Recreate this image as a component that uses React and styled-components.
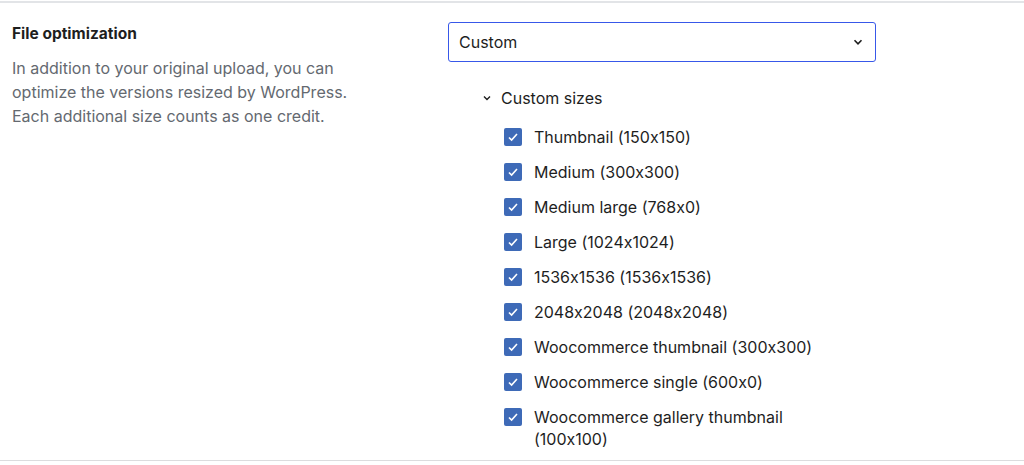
import React from 'react';
import styled, { createGlobalStyle } from 'styled-components';

const Global = createGlobalStyle`
  body {
    margin: 0;
    background: #fff;
    font-family: "Inter", "Liberation Sans", sans-serif;
    font-feature-settings: "calt" 0;
    color: #1e1e1e;
  }
`;

const Section = styled.div`
  border-top: 2px solid #e2e4e7;
  border-bottom: 1px solid #dcdcde;
  margin-top: 1px;
  height: 460px;
  box-sizing: border-box;
  display: grid;
  grid-template-columns: 436px 428px;
  padding: 19px 0 0 12px;
`;

const Left = styled.div`
  padding-top: 2px;
`;

const Title = styled.h3`
  margin: 0 0 12px;
  font-size: 15.5px;
  font-weight: 700;
  line-height: 20px;
`;

const Desc = styled.p`
  margin: 0;
  font-size: 16px;
  line-height: 24px;
  color: #646970;
  width: 350px;
`;

const Select = styled.div`
  height: 40px;
  box-sizing: border-box;
  border: 1.5px solid #3858e9;
  border-radius: 3px;
  display: flex;
  align-items: center;
  justify-content: space-between;
  padding: 0 10px 0 10px;
  font-size: 16px;
`;

const Toggle = styled.div`
  margin: 26px 0 0 33px;
  display: flex;
  align-items: center;
  gap: 8px;
  font-size: 16px;
`;

const List = styled.div`
  margin: 18px 0 0 56px;
  display: flex;
  flex-direction: column;
  gap: 13px;
`;

const Row = styled.label`
  display: flex;
  align-items: flex-start;
  gap: 12px;
  font-size: 16px;
  line-height: 22px;
`;

const Box = styled.span`
  flex: none;
  width: 18px;
  height: 18px;
  margin-top: 2px;
  border-radius: 2px;
  background: #3e6ab7;
  display: flex;
  align-items: center;
  justify-content: center;
`;

const Label = styled.span`
  max-width: 290px;
`;

const Chevron = ({ size = 14 }) => (
  <svg width={size} height={size} viewBox="0 0 12 12" fill="none" stroke="#1e1e1e" strokeWidth="1.4">
    <path d="M3 4.5l3 3 3-3" />
  </svg>
);

const sizes = [
  'Thumbnail (150x150)',
  'Medium (300x300)',
  'Medium large (768x0)',
  'Large (1024x1024)',
  '1536x1536 (1536x1536)',
  '2048x2048 (2048x2048)',
  'Woocommerce thumbnail (300x300)',
  'Woocommerce single (600x0)',
  'Woocommerce gallery thumbnail (100x100)',
];

export default function App() {
  return (
    <>
      <Global />
      <Section>
        <Left>
          <Title>File optimization</Title>
          <Desc>
            In addition to your original upload, you can optimize the versions resized by WordPress.
            Each additional size counts as one credit.
          </Desc>
        </Left>
        <div>
          <Select>
            <span>Custom</span>
            <Chevron />
          </Select>
          <Toggle>
            <Chevron size={12} />
            <span>Custom sizes</span>
          </Toggle>
          <List>
            {sizes.map((s) => (
              <Row key={s}>
                <Box>
                  <svg width="12" height="12" viewBox="0 0 12 12" fill="none" stroke="#fff" strokeWidth="1.6">
                    <path d="M2 6.5l2.6 2.6L10 3" />
                  </svg>
                </Box>
                <Label>{s}</Label>
              </Row>
            ))}
          </List>
        </div>
      </Section>
    </>
  );
}
